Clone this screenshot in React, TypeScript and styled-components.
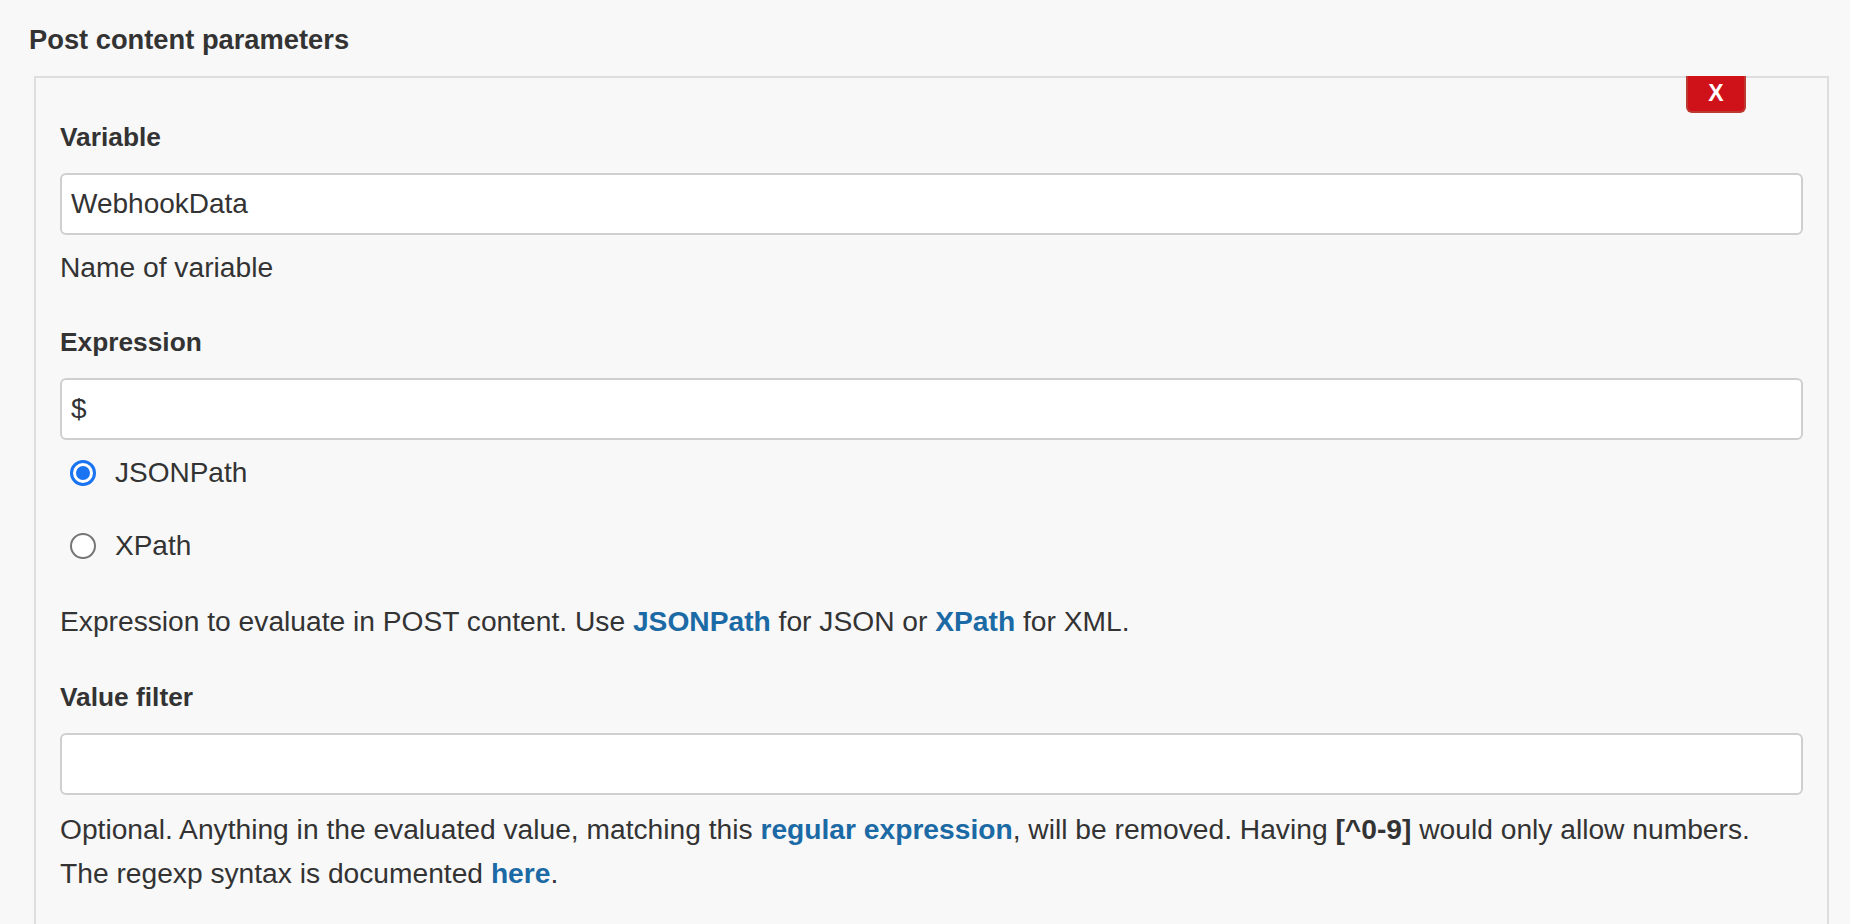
import React from "react";
import styled, { createGlobalStyle } from "styled-components";

const Global = createGlobalStyle`
  html, body { margin: 0; padding: 0; }
  body {
    background: #f8f8f8;
    font-family: "Liberation Sans", Arial, Helvetica, sans-serif;
    color: #333;
    width: 1850px;
    height: 924px;
    overflow: hidden;
  }
`;

const Page = styled.div`
  padding: 22px 21px 0 34px;
`;

const Heading = styled.div`
  font-size: 27.3px;
  font-weight: bold;
  line-height: 36px;
  margin-left: -5px;
  margin-bottom: 18px;
`;

const Box = styled.div`
  position: relative;
  border: 2px solid #dedede;
  border-bottom: none;
  padding: 37px 24px 40px 24px;
  min-height: 900px;
`;

const DeleteButton = styled.button`
  position: absolute;
  top: -2px;
  right: 81px;
  width: 60px;
  height: 37px;
  background: #cf1219;
  border: 2px solid #bd3a33;
  border-top: none;
  border-radius: 0 0 6px 6px;
  color: #fff;
  font-family: "Liberation Sans", Arial, sans-serif;
  font-weight: bold;
  font-size: 23px;
  padding: 0;
  display: flex;
  align-items: center;
  justify-content: center;
`;

const Label = styled.div<{ $gap?: number }>`
  font-size: 26.3px;
  font-weight: bold;
  line-height: 44px;
  margin-top: ${(p) => p.$gap ?? 0}px;
`;

const Input = styled.div`
  box-sizing: border-box;
  height: 62px;
  margin-top: 14px;
  background: #fff;
  border: 2px solid #cfcfcf;
  border-radius: 6px;
  padding: 0 9px;
  display: flex;
  align-items: center;
  font-size: 28px;
  color: #333;
`;

const Help = styled.div<{ $gap: number }>`
  font-size: 28.2px;
  line-height: 44px;
  margin-top: ${(p) => p.$gap}px;
`;

const Link = styled.a`
  color: #1b6aa5;
  font-weight: bold;
  text-decoration: none;
`;

const Strong = styled.b`
  font-weight: bold;
`;

const RadioRow = styled.label<{ $gap: number }>`
  display: flex;
  align-items: center;
  height: 44px;
  margin-top: ${(p) => p.$gap}px;
  margin-left: 10px;
  font-size: 28px;
  gap: 19px;
`;

const RadioDot = styled.span<{ $checked?: boolean }>`
  box-sizing: border-box;
  width: 26px;
  height: 26px;
  border-radius: 50%;
  background: #fff;
  border: ${(p) => (p.$checked ? "3px solid #1a73f0" : "2px solid #767676")};
  display: flex;
  align-items: center;
  justify-content: center;
  &::after {
    content: "";
    display: ${(p) => (p.$checked ? "block" : "none")};
    width: 14px;
    height: 14px;
    border-radius: 50%;
    background: #1a73f0;
  }
`;

export default function App() {
  return (
    <>
      <Global />
      <Page>
        <Heading>Post content parameters</Heading>
        <Box>
          <DeleteButton>X</DeleteButton>
          <Label>Variable</Label>
          <Input>WebhookData</Input>
          <Help $gap={10}>Name of variable</Help>
          <Label $gap={31}>Expression</Label>
          <Input>$</Input>
          <RadioRow $gap={11}>
            <RadioDot $checked />
            JSONPath
          </RadioRow>
          <RadioRow $gap={29}>
            <RadioDot />
            XPath
          </RadioRow>
          <Help $gap={31}>
            Expression to evaluate in POST content. Use <Link>JSONPath</Link> for JSON or{" "}
            <Link>XPath</Link> for XML.
          </Help>
          <Label $gap={32}>Value filter</Label>
          <Input />
          <Help $gap={12}>
            Optional. Anything in the evaluated value, matching this <Link>regular expression</Link>, will
            be removed. Having <Strong>[^0-9]</Strong> would only allow numbers.
            <br />
            The regexp syntax is documented <Link>here</Link>.
          </Help>
        </Box>
      </Page>
    </>
  );
}
